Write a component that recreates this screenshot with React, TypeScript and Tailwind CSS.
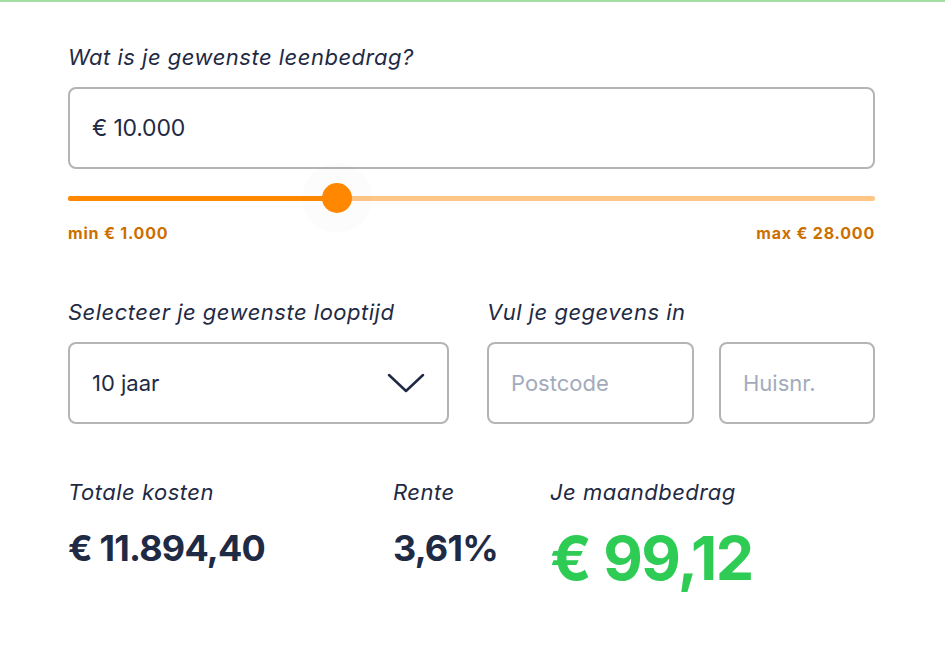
import React, { useState } from "react";

const font = { fontFamily: "Inter, 'Noto Sans', Arial, sans-serif" };

const LoanCalculator: React.FC = () => {
  const [amount] = useState(10000);
  const min = 1000;
  const max = 28000;
  const pct = ((amount - min) / (max - min)) * 100;

  return (
    <div className="min-h-screen bg-white border-t-2 border-[#a3dfa3]" style={font}>
      <div className="w-[807px] ml-[68px] pt-[41px]">
        {/* Leenbedrag */}
        <label className="block text-[22px] leading-[28px] italic text-[#1f2a44] tracking-[0.5px]">
          Wat is je gewenste leenbedrag?
        </label>
        <div className="mt-4 h-[82px] rounded-lg border-2 border-[#b4b4b4] flex items-center px-[22px]">
          <span className="text-[23px] text-[#1f2a44] tracking-[-0.2px]">€ 10.000</span>
        </div>

        {/* Slider */}
        <div className="relative mt-[14px] h-[30px] flex items-center">
          <div className="w-full h-[5px] rounded-full bg-[#ffc687]" />
          <div
            className="absolute left-0 top-[12.5px] h-[5px] rounded-full bg-[#ff8800]"
            style={{ width: `${pct}%` }}
          />
          <div
            className="absolute top-0 w-[30px] h-[30px] -ml-[15px] rounded-full bg-[#ff8800] shadow-[0_0_0_20px_rgba(0,0,0,0.012)]"
            style={{ left: `${pct}%` }}
          />
        </div>
        <div className="mt-[10px] flex justify-between text-[16px] leading-[20px] font-bold text-[#cc6f00] tracking-[0.8px]">
          <span>min € 1.000</span>
          <span>max € 28.000</span>
        </div>

        {/* Looptijd + gegevens */}
        <div className="mt-[55px] flex">
          <div className="w-[381px]">
            <label className="block text-[22px] leading-[28px] italic text-[#1f2a44] tracking-[0.5px]">
              Selecteer je gewenste looptijd
            </label>
            <div className="mt-4 h-[82px] rounded-lg border-2 border-[#b4b4b4] flex items-center justify-between pl-[22px] pr-[22px]">
              <span className="text-[22px] text-[#1f2a44]">10 jaar</span>
              <svg width="38" height="22" viewBox="0 0 38 22" fill="none">
                <polyline
                  points="2,3 19,19 36,3"
                  stroke="#1f2a44"
                  strokeWidth="2.5"
                  strokeLinecap="round"
                  strokeLinejoin="round"
                />
              </svg>
            </div>
          </div>
          <div className="ml-[38px] flex-1">
            <label className="block text-[22px] leading-[28px] italic text-[#1f2a44] tracking-[0.5px]">
              Vul je gegevens in
            </label>
            <div className="mt-4 flex gap-[25px]">
              <div className="w-[207px] h-[82px] rounded-lg border-2 border-[#b4b4b4] flex items-center px-[22px]">
                <span className="text-[22px] text-[#a3abbb]">Postcode</span>
              </div>
              <div className="flex-1 h-[82px] rounded-lg border-2 border-[#b4b4b4] flex items-center px-[22px]">
                <span className="text-[22px] text-[#a3abbb]">Huisnr.</span>
              </div>
            </div>
          </div>
        </div>

        {/* Resultaten */}
        <div className="mt-[54px] flex">
          <div className="w-[325px]">
            <div className="text-[22px] leading-[28px] italic text-[#1f2a44] tracking-[0.5px]">Totale kosten</div>
            <div className="mt-[20px] text-[36px] leading-[44px] font-bold text-[#1f2a44] tracking-[-0.8px]">
              € 11.894,40
            </div>
          </div>
          <div className="w-[157px]">
            <div className="text-[22px] leading-[28px] italic text-[#1f2a44] tracking-[0.5px]">Rente</div>
            <div className="mt-[20px] text-[36px] leading-[44px] font-bold text-[#1f2a44] tracking-[-0.8px]">
              3,61%
            </div>
          </div>
          <div>
            <div className="text-[22px] leading-[28px] italic text-[#1f2a44] tracking-[0.5px]">Je maandbedrag</div>
            <div className="mt-[18px] text-[61px] leading-[68px] font-bold text-[#2ecc55] tracking-[-1.5px]">
              € 99,12
            </div>
          </div>
        </div>
      </div>
    </div>
  );
};

export default function App() {
  return <LoanCalculator />;
}
